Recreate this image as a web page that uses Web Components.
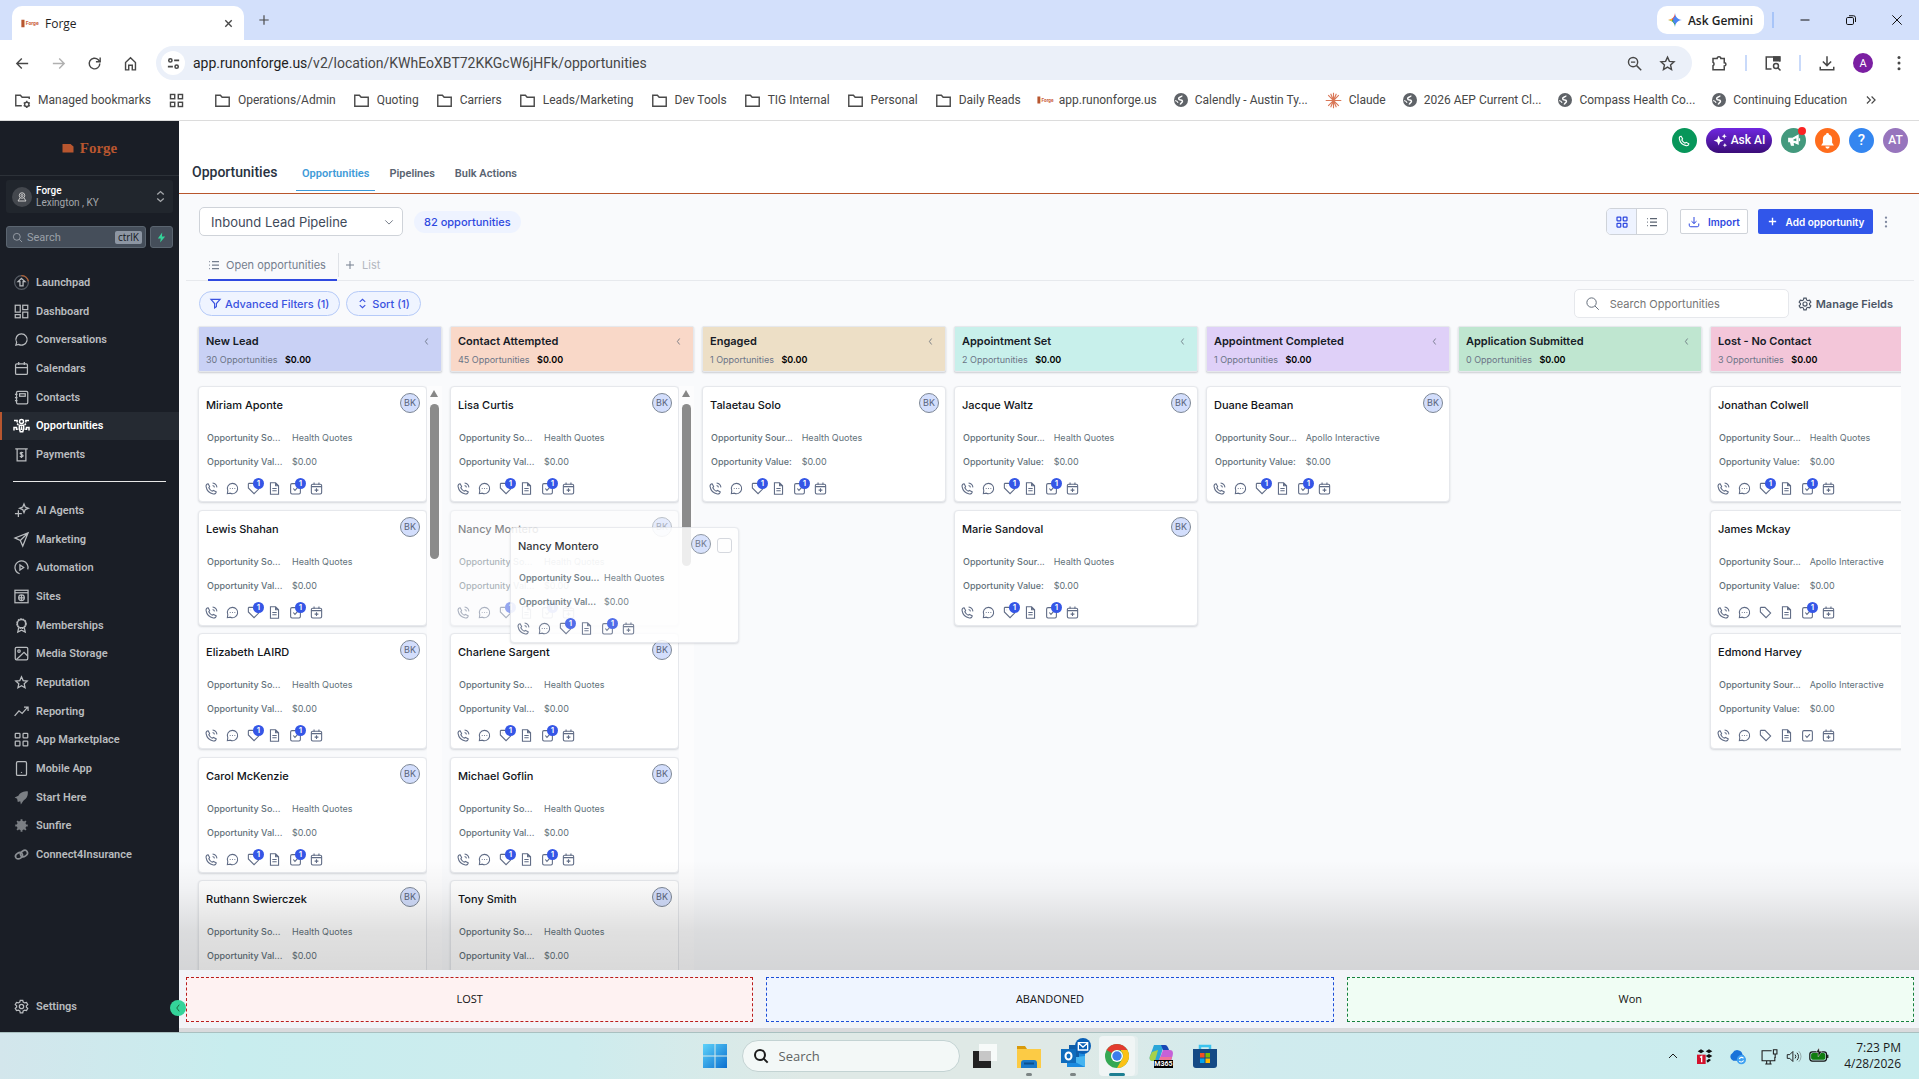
<!DOCTYPE html>
<html lang="en">
<head>
<meta charset="utf-8">
<title>Forge</title>
<style>
    html, body {
        height: 100%;
        margin: 0;
    }

    body {
        display: flex;
        flex-direction: column;
        overflow: hidden;
        font-family: Inter, "Liberation Sans", sans-serif;
        background: #fff;
    }

    .app {
        display: flex;
        flex: 1;
        min-height: 0;
    }

    .page {
        display: flex;
        flex-direction: column;
        flex: 1;
        min-width: 0;
        background: #f9fafc;
    }
</style>
</head>
<body>
<browser-bar></browser-bar>
<div class="app">
    <side-bar></side-bar>
    <div class="page">
        <page-header></page-header>
        <board-toolbar></board-toolbar>
        <pipeline-board></pipeline-board>
        <drop-bar></drop-bar>
    </div>
</div>
<task-bar></task-bar>

<script>
const ICONS = {
    back: '<path d="M20 12H5M11 5l-7 7 7 7"/>',
    forward: '<path d="M4 12h15M13 5l7 7-7 7"/>',
    reload: '<path d="M19.5 12a7.5 7.5 0 1 1-2.2-5.3L20 9.400"/><path d="M20 3.500V9.500h-6"/>',
    home: '<path d="M5 10.500V21h4.500v-6.500h5V21H19V10.500L12 4z"/>',
    tune: '<circle cx="7" cy="7" r="2.600"/><path d="M13 7h8M3 17h8"/><circle cx="17" cy="17" r="2.600"/>',
    zoomout: '<circle cx="10" cy="10" r="6.500"/><path d="M15 15l6.500 6.500M7 10h6"/>',
    star: '<path d="M12 3l2.700 6 6.500.7-4.900 4.300 1.400 6.500L12 17.200l-5.700 3.300L7.700 14 2.800 9.700 9.300 9z"/>',
    puzzle: '<path d="M4 6h5.500a2.500 2.500 0 0 1 5 0H19v5.500a2 2 0 0 1 0 4.500V21H4v-5.500a2.500 2.500 0 0 0 0-4.500z"/>',
    tabsearch: '<path d="M10 20H3V4h18v6"/><path d="M13 4h8v5h-8z" fill="currentColor"/><circle cx="16" cy="16" r="3.300"/><path d="M18.500 18.500L22 22"/>',
    download: '<path d="M12 3v12M6.500 10l5.500 5.500L17.500 10M3 17v4h18v-4"/>',
    dots: '<g fill="currentColor" stroke="none"><circle cx="12" cy="4.500" r="2"/><circle cx="12" cy="12" r="2"/><circle cx="12" cy="19.500" r="2"/></g>',
    close: '<path d="M5 5l14 14M19 5L5 19"/>',
    plus: '<path d="M12 4v16M4 12h16"/>',
    minus: '<path d="M3 12h18"/>',
    restore: '<rect x="3" y="7" width="14" height="14" rx="2.500"/><path d="M8 3.500h9a4 4 0 0 1 4 4V16"/>',
    folder: '<path d="M2.500 4.500h6.500l2.500 3h10v12.500h-19z"/>',
    managed: '<path d="M11 19.500H2.500v-15H9l2.500 3h10V10"/><circle cx="18" cy="17.500" r="3"/><path d="M18 12.500v2M18 20.500v2M13.700 15l1.700 1M20.600 19l1.700 1M13.700 20l1.700-1M20.600 16l1.700-1"/>',
    apps: '<rect x="3.500" y="3.500" width="6" height="6"/><rect x="14.500" y="3.500" width="6" height="6"/><rect x="3.500" y="14.500" width="6" height="6"/><rect x="14.500" y="14.500" width="6" height="6"/>',
    globe: '<circle cx="12" cy="12" r="12" fill="#5f6368" stroke="none"/><path d="M14 4.500c-1 3-7 2-6 5.500s6 1 6.500 4-4 3-3.500 6" stroke="#fff" stroke-width="2.600"/><path d="M2 13c2 .500 4 1 5 4" stroke="#fff" stroke-width="1.800"/>',
    claude: '<path d="M12 1v22M1 12h22M4.500 4.500l15 15M19.500 4.500l-15 15M8 2.500l8 19M16 2.500l-8 19" stroke="#d97757" stroke-width="1.600"/>',
    more: '<path d="M5 6l6 6-6 6M13 6l6 6-6 6"/>',
    chevdown: '<path d="M3 8l9 9 9-9"/>',
    chevup: '<path d="M4 16l8-8 8 8"/>',
    chevleft: '<path d="M15 4l-6 8 6 8"/>',
    updown: '<path d="M6 8.500L12 3l6 5.500M6 15.500l6 5.500 6-5.500"/>',
    search: '<circle cx="10.500" cy="10.500" r="7.500"/><path d="M16 16l6 6"/>',
    bolt: '<path d="M13.500 1L4 14h6.500L9 23l11-13h-7z" fill="#34d399" stroke="none"/>',
    account: '<circle cx="12" cy="9" r="5.500"/><circle cx="12" cy="9" r="2"/><path d="M8 14l-4 6h16l-4-6"/>',
    launch: '<circle cx="12" cy="12" r="11" stroke="#555b63"/><path d="M12 1a11 11 0 0 1 11 9" stroke="#b8602f"/><path d="M12 5.500l5.500 5h-3v7h-5v-7h-3z"/>',
    dashboard: '<rect x="2" y="2" width="8" height="11"/><rect x="14" y="2" width="8" height="7"/><rect x="2" y="17" width="8" height="5"/><rect x="14" y="13" width="8" height="9"/>',
    chat: '<path d="M12 3a9 9 0 1 1-4.500 16.800L3 21l1.200-4.500A9 9 0 0 1 12 3z"/>',
    calendar: '<rect x="2.500" y="4.500" width="19" height="17" rx="2"/><path d="M2.500 10.500h19M7.500 1.500v5M16.500 1.500v5"/>',
    contacts: '<rect x="4" y="2" width="18" height="20" rx="2"/><rect x="9" y="6" width="9" height="4"/><path d="M1.500 7h4M1.500 12h4M1.500 17h4"/>',
    people: '<g stroke-width="2.400"><circle cx="12" cy="5.500" r="3.200"/><path d="M8.500 11.500h7v5l-1.500 5.500h-4l-1.500-5.500zM12 13v6"/><path d="M0 4h5v3M24 4h-5v3M0 20v-5h4v4M24 20v-5h-4v4M5 9l2 2M19 9l-2 2M5.500 18H7M17 18h1.500"/></g>',
    payments: '<path d="M2 3h20M5 3v19h14V3"/><path d="M14.500 9.500c-1-1.500-5-1-4.500 1s4.500 1.500 4.500 3.500-4 2-5 .5M12 7.500v10"/>',
    agents: '<path d="M16 1.500l2 5 5 2-5 2-2 5-2-5-5-2 5-2zM7 11.500v11M1.500 17h11"/>',
    send: '<path d="M22.500 1.500L1.500 9.500l8.500 4 4 9zM10 13.500L22 2"/>',
    automation: '<path d="M9 22A10.500 10.500 0 1 1 22 15"/><path d="M9.500 8v8l6-4z"/>',
    sites: '<rect x="1.500" y="2" width="21" height="20"/><path d="M1.500 6h21"/><circle cx="12" cy="14" r="4.500"/><path d="M12 9.500v9M7.500 14h9"/>',
    badge: '<circle cx="12" cy="9" r="7.500" stroke-dasharray="3 1"/><circle cx="12" cy="9" r="6.500"/><path d="M7.500 15.500L6 22.500l6-3 6 3-1.500-7"/>',
    image: '<rect x="2" y="2" width="20" height="20" rx="2"/><circle cx="8" cy="8" r="2"/><path d="M4 21.500L16 10l6 6"/>',
    trend: '<path d="M1 19l7-8 5 4 9-10M16 5h6.500v6"/>',
    grid: '<rect x="2" y="2" width="7.500" height="7.500" rx="1"/><rect x="14.500" y="2" width="7.500" height="7.500" rx="1"/><rect x="2" y="14.500" width="7.500" height="7.500" rx="1"/><rect x="14.500" y="14.500" width="7.500" height="7.500" rx="1"/>',
    mobile: '<rect x="4" y="1" width="16" height="22" rx="2"/><path d="M12 17.500v1.500"/>',
    rocket: '<path d="M22 2C14 1 9 5 7 9L1 12l4 2 1 5 4-1 1 5 4-6c5-3 8-8 7-15z" fill="#7b7f84" stroke="none"/>',
    sun: '<g stroke="#7b7f84" stroke-width="3"><circle cx="12" cy="12" r="6" fill="#7b7f84"/><path d="M12 2v20M2 12h20M5 5l14 14M19 5L5 19"/></g>',
    link: '<g stroke="#8b8f94" stroke-width="2.600"><ellipse cx="8" cy="14" rx="6" ry="4.500" transform="rotate(-35 8 14)"/><ellipse cx="16" cy="10.500" rx="6" ry="4.500" transform="rotate(-35 16 10.500)"/></g>',
    gear: '<circle cx="12" cy="12" r="3.500"/><path d="M10 2h4l.7 3 2.300 1.300L20 5.500l2 3.500-2.200 2v2l2.200 2-2 3.500-3-.8-2.300 1.300-.7 3h-4l-.7-3L7 17.700l-3 .8L2 15l2.200-2v-2L2 9l2-3.500 3 .8L9.300 5z"/>',
    list: '<path d="M8 5h14M8 12h14M8 19h14M2.500 5h1.500M2.500 12h1.500M2.500 19h1.500"/>',
    import: '<path d="M12 2v13M7 10.500l5 4.500 5-4.500M2.500 15v3.500a3 3 0 0 0 3 3h13a3 3 0 0 0 3-3V15"/>',
    filter: '<path d="M2 3h20l-8 9v7l-4 2.500V12z"/>',
    phone: '<path d="M8.500 8.500L5.800 3.300C3.500 3.500 1.500 5.500 2 8.500c1.200 7 6.500 12.300 13.500 13.500 3 .5 5-1.500 5.200-3.800l-5.200-2.700-2 1.500c-3-1.200-5-3.500-6.500-6.500z"/><path d="M14 6.500c2 .3 3.200 1.500 3.500 3.500M14 2c4.500.5 7.500 3.500 8 8"/>',
    handset: '<path d="M8.500 9L5.800 4C3.500 4 2 6 2.500 9c1.200 6.500 6 11.300 12.500 12.500 3 .5 5-1 5-3.300L15 15.500l-2 1.500c-2.500-1.200-4.500-3-6-6z"/>',
    sms: '<path d="M12 2.500a9.500 9.500 0 1 1-4 18.100l-5.500 1 .8-5.500A9.500 9.500 0 0 1 12 2.500z"/><path d="M7 12h1.500M11.300 12h1.500M15.600 12h1.500"/>',
    tag: '<path d="M2.500 3.500V11L13 21.500 21.500 13 11 2.500H3.500z"/><path d="M7 7.500h.5"/>',
    doc: '<path d="M14 1.500H4.500v21h15V7zM14 1.500V7h5.500M8 12h8M8 16h8"/>',
    check: '<rect x="3" y="3" width="18" height="19" rx="2.500"/><path d="M8 12l3 3.500 5.500-6"/>',
    calplus: '<rect x="2.500" y="4" width="19" height="18" rx="2.500"/><path d="M2.500 8.500h19M7.500 1v4M16.500 1v4M12 11.500v7M8.500 15h7"/>',
    sparkle: '<g fill="currentColor" stroke="none"><path d="M9 4l2.300 6L17 12l-5.700 2.300L9 20l-2.300-5.700L1 12l5.700-2z"/><path d="M18 1l1.200 3L22 5l-2.800 1.200L18 9l-1.200-2.800L14 5l2.800-1zM19 16l1 2.500 2.500 1-2.500 1L19 23l-1-2.500-2.500-1 2.500-1z"/></g>',
    horn: '<path d="M3 9h7l9-5v15l-9-4H3zM6 15l1.500 6H11l-1-6" fill="currentColor"/><path d="M21.500 9v5"/><path d="M11 11l5-2v5l-5-1z" fill="#43997d" stroke="none"/>',
    bell: '<path d="M12 1.500a2 2 0 0 0-2 2C7 4.500 5.500 7 5.500 10v5L3 19h18l-2.500-4v-5c0-3-1.500-5.500-4.500-6.500a2 2 0 0 0-2-2zM9 20.500a3 3 0 0 0 6 0z" fill="currentColor" stroke="none"/>',
    gemini: '<path d="M12 0c1 7 4 11 12 12-8 1-11 5-12 12z" fill="#4b84f3" stroke="none"/><path d="M12 0v12H0c8-1 11-5 12-12z" fill="#e8514a" stroke="none"/><path d="M0 12h12v12C11 17 8 13 0 12z" fill="#35a265" stroke="none"/><path d="M0 12c3-.5 5-1 7-2.500v5C5 13 3 12.500 0 12z" fill="#f5c02d" stroke="none"/><path d="M9 9l3-3 6 6-6 6-3-2z" fill="#4b84f3" stroke="none"/>',
    forge: '<rect x="-1" y="6" width="5" height="12" fill="#b8562f" stroke="none"/><text x="6" y="15" font-size="8" font-weight="700" font-family="Roboto, sans-serif" fill="#c9603b" stroke="none">Forge</text>',
    anvil: '<path d="M1 4h16l6 5v12H1z" fill="#b8562f" stroke="none"/>',
    windows: '<defs><linearGradient id="w" x1="0" y1="0" x2="1" y2="1"><stop offset="0" stop-color="#5fd3fa"/><stop offset="1" stop-color="#0a6fd0"/></linearGradient></defs><path d="M0 0h11.500v11.500H0zM12.500 0H24v11.500H12.500zM0 12.500h11.500V24H0zM12.500 12.500H24V24H12.500z" fill="url(#w)" stroke="none"/>',
    taskview: '<rect x="0" y="7" width="18" height="17" fill="#222" stroke="none"/><rect x="6" y="0" width="18" height="17" fill="#fff" fill-opacity=".75" stroke="none"/>',
    explorer: '<path d="M0 2h8l2 3h14v19H0z" fill="#d99a0b" stroke="none"/><rect y="5" width="24" height="19" fill="#fccb45" stroke="none"/><path d="M4 24v-5a3 3 0 0 1 3-3h10a3 3 0 0 1 3 3v5z" fill="#1b78c8" stroke="none"/><path d="M7 19.500h10" stroke="#0b4f8f"/>',
    outlook: '<path d="M6 6h18v17H6z" fill="#1a8ae0" stroke="none"/><path d="M6 14l18 9V12z" fill="#46b4f0" stroke="none"/><path d="M8 1h10v12H8z" fill="#0f5da8" stroke="none"/><rect y="5" width="15" height="14" fill="#0f6cbd" stroke="none"/><ellipse cx="7.500" cy="12" rx="3" ry="3.500" stroke="#fff" stroke-width="2"/>',
    mail: '<circle cx="12" cy="12" r="12" fill="#0a5fb5" stroke="none"/><path d="M5 7h14v11H5zM5 7.500l7 6 7-6" stroke="#fff"/>',
    chrome: '<circle cx="12" cy="12" r="12" fill="#34a853" stroke="none"/><path d="M12 0a12 12 0 0 1 10.400 6H12a6 6 0 0 0-5.200 3L1.600 6A12 12 0 0 1 12 0z" fill="#e33b2e" stroke="none"/><path d="M22.400 6A12 12 0 0 1 12 24l5.200-9A6 6 0 0 0 16 7V6z" fill="#fbc116" stroke="none"/><circle cx="12" cy="12" r="6" fill="#fff" stroke="none"/><circle cx="12" cy="12" r="4.700" fill="#3b7ded" stroke="none"/>',
    copilot: '<path d="M5 1h10l-5 16H4c-3 0-4-2-3-5z" fill="#2ba6d8" stroke="none"/><path d="M3 8l6-2-3 11H4c-3 0-4-2-3-5z" fill="#a6d24b" stroke="none"/><path d="M12 1h4c2 0 3 2 4 5h-6z" fill="#1746b5" stroke="none"/><path d="M14 6h7c3 0 3.500 3 2.500 6l-2 7H9z" fill="#c561d8" stroke="none"/><path d="M11 13h12l-2 6H9z" fill="#f0729a" stroke="none"/>',
    store: '<path d="M7 6V2h10v4" stroke="#3cc3ee" stroke-width="2.500"/><path d="M0 5h24v16a3 3 0 0 1-3 3H3a3 3 0 0 1-3-3z" fill="#154a85" stroke="none"/><path d="M7 9h4.500v4.500H7z" fill="#f25022" stroke="none"/><path d="M12.500 9H17v4.500h-4.500z" fill="#7fba00" stroke="none"/><path d="M7 14.500h4.500V19H7z" fill="#00a4ef" stroke="none"/><path d="M12.500 14.500H17V19h-4.500z" fill="#ffb900" stroke="none"/>',
    dropbox: '<g fill="#111" stroke="none"><path d="M1 5l5-3 5 3-5 3zM13 5l5-3 5 3-5 3zM13 12l5-3 5 3-5 3zM14 19l4-3 3 2-5 4z"/></g><rect x="0" y="10" width="13" height="14" fill="#d3122c" stroke="none"/><path d="M4.500 14l2.500-1.500v9" stroke="#fff" stroke-width="2"/>',
    cloud: '<path d="M6 18a6 6 0 0 1-1-11 7.500 7.500 0 0 1 14 2 5 5 0 0 1 0 9z" fill="#1a73d9" stroke="none"/><circle cx="17.500" cy="16.500" r="6.500" fill="#3fa2f2" stroke="none"/><path d="M14.500 15.500a3.500 3.500 0 0 1 6-1M20.500 17.500a3.500 3.500 0 0 1-6 1" stroke="#fff" stroke-width="1.500"/>',
    network: '<path d="M15 4H1.500v14h18v-5M8 18v4M13 18v4M6 22.500h9"/><path d="M17.500 2.500h5v6h-5zM20 8.500V14"/>',
    volume: '<path d="M2 9v6h4l5 5V4L6 9zM14.500 9a4.500 4.500 0 0 1 0 6M17.500 6a8.500 8.500 0 0 1 0 12"/><path d="M20.500 3.500a12 12 0 0 1 0 17" stroke-opacity=".35"/>',
    battery: '<rect x="1" y="7" width="20" height="11" rx="3" stroke="#111"/><rect x="2.500" y="8.500" width="17" height="8" rx="2" fill="#107c10" stroke="none"/><path d="M22.500 10.500v4" stroke="#111"/><path d="M12 2l-3.500 5.500h2.500V13l4.500-6.500h-3z" fill="#111" stroke="#fff" stroke-width=".5"/>'
};

class UiIcon extends HTMLElement {
    connectedCallback() {
        const size = this.getAttribute("size") || 16;
        const weight = this.getAttribute("weight") || 2;
        this.attachShadow({mode: 'open'}).innerHTML = `
        <style>
            :host { display: inline-flex; flex: none; }
            svg { display: block; overflow: visible; }
        </style>
        <svg width="${size}" height="${size}" viewBox="0 0 24 24" fill="none" stroke="currentColor" stroke-width="${weight}" aria-hidden="true">${ICONS[this.getAttribute("name")]}</svg>
        `;
    }
}
customElements.define('ui-icon', UiIcon);


class BookmarkLink extends HTMLElement {
    connectedCallback() {
        const icon = this.getAttribute("icon");
        const size = {forge: 14, globe: 14}[icon] || 17;
        this.attachShadow({mode: 'open'}).innerHTML = `
        <style>
            :host { display: block; flex: none; }
            a {
                display: flex;
                align-items: center;
                gap: 7px;
                color: #474747;
                text-decoration: none;
                white-space: nowrap;
            }
            ui-icon { color: #4a4a4a; }
        </style>
        <a href="#"><ui-icon name="${icon}" size="${size}"></ui-icon><slot></slot></a>
        `;
    }
}
customElements.define('bookmark-link', BookmarkLink);


class BrowserBar extends HTMLElement {
    connectedCallback() {
        const bookmarks = [
            ["folder", "Operations/Admin"], ["folder", "Quoting"], ["folder", "Carriers"],
            ["folder", "Leads/Marketing"], ["folder", "Dev Tools"], ["folder", "TIG Internal"],
            ["folder", "Personal"], ["folder", "Daily Reads"], ["forge", "app.runonforge.us"],
            ["globe", "Calendly - Austin Ty..."], ["claude", "Claude"], ["globe", "2026 AEP Current Cl..."],
            ["globe", "Compass Health Co..."], ["globe", "Continuing Education"]
        ];
        this.attachShadow({mode: 'open'}).innerHTML = `
        <style>
            :host {
                display: block;
                font-family: Roboto, "Open Sans", sans-serif;
                font-size: 12px;
                color: #1f1f1f;
                background: #fff;
                border-bottom: 1px solid #dcdcdc;
            }
            button {
                display: flex;
                align-items: center;
                justify-content: center;
                border: 0;
                padding: 0;
                background: none;
                color: #474747;
                font: inherit;
            }
            .strip {
                display: flex;
                align-items: center;
                height: 40px;
                padding: 0 11px 0 12px;
                background: #d3e0fb;
                font-family: "Open Sans", sans-serif;
            }
            .tab {
                display: flex;
                align-items: center;
                align-self: flex-end;
                gap: 8px;
                box-sizing: border-box;
                width: 232px;
                height: 34px;
                padding: 0 10px;
                border-radius: 10px 10px 0 0;
                background: #fff;
            }
            .tab span { flex: 1; }
            .new { width: 40px; }
            .gemini {
                gap: 6px;
                width: 107px;
                height: 28px;
                margin-left: auto;
                border-radius: 10px;
                background: #fff;
                color: #1f1f1f;
                font-weight: 600;
            }
            .rule { width: 2px; height: 16px; background: #c9dafa; }
            .strip .rule { margin: 0 8px; background: #a8c5f8; }
            .win { width: 46px; color: #111; }
            .win:last-child { width: 22px; margin-left: 12px; }
            .bar {
                display: flex;
                align-items: center;
                gap: 16px;
                height: 40px;
                padding: 0 11px 0 12px;
            }
            .bar > button { width: 20px; height: 20px; }
            .bar .off { color: #b0b0b0; }
            .omni {
                display: flex;
                align-items: center;
                flex: 1;
                gap: 8px;
                height: 34px;
                margin-top: 6px;
                padding: 0 16px 0 5px;
                border-radius: 17px;
                background: #ebf0f9;
                font-size: 14px;
            }
            .omni .site { width: 24px; height: 24px; border-radius: 50%; background: #fff; }
            .omni .star { margin-left: 8px; }
            .url { flex: 1; color: #474747; }
            .url b { color: #1f1f1f; font-weight: 400; }
            .right { display: flex; align-items: center; gap: 17px; margin-left: 2px; margin-top: 6px; }
            .nav { margin-top: 6px; }
            .me { width: 20px; height: 20px; border-radius: 50%; background: #7b1fa2; color: #fff; font-size: 11px; }
            .marks {
                display: flex;
                align-items: center;
                gap: 17px;
                height: 40px;
                padding: 0 28px 0 14px;
            }
            .marks .rule { margin-left: -4px; margin-right: -1px; }
            .marks .over { margin-left: auto; margin-right: 14px; }
        </style>
        <div class="strip">
            <div class="tab">
                <ui-icon name="forge" size="15"></ui-icon>
                <span>Forge</span>
                <button aria-label="Close tab"><ui-icon name="close" size="11" weight="3"></ui-icon></button>
            </div>
            <button class="new" aria-label="New tab"><ui-icon name="plus" size="14"></ui-icon></button>
            <button class="gemini"><ui-icon name="gemini" size="14"></ui-icon>Ask Gemini</button>
            <div class="rule"></div>
            <button class="win" aria-label="Minimize"><ui-icon name="minus" size="12"></ui-icon></button>
            <button class="win" aria-label="Restore"><ui-icon name="restore" size="12"></ui-icon></button>
            <button class="win" aria-label="Close"><ui-icon name="close" size="16" weight="1.500"></ui-icon></button>
        </div>
        <div class="bar">
            <button class="nav" aria-label="Back"><ui-icon name="back" size="17"></ui-icon></button>
            <button class="nav off" aria-label="Forward"><ui-icon name="forward" size="17"></ui-icon></button>
            <button class="nav" aria-label="Reload"><ui-icon name="reload" size="17"></ui-icon></button>
            <button class="nav" aria-label="Home"><ui-icon name="home" size="17"></ui-icon></button>
            <div class="omni">
                <button class="site" aria-label="Site information"><ui-icon name="tune" size="15" weight="2.500"></ui-icon></button>
                <span class="url"><b>app.runonforge.us</b>/v2/location/KWhEoXBT72KKGcW6jHFk/opportunities</span>
                <button aria-label="Zoom"><ui-icon name="zoomout" size="17"></ui-icon></button>
                <button class="star" aria-label="Bookmark"><ui-icon name="star" size="17"></ui-icon></button>
            </div>
            <div class="right">
                <button aria-label="Extensions"><ui-icon name="puzzle" size="18"></ui-icon></button>
                <div class="rule"></div>
                <button aria-label="Search tabs"><ui-icon name="tabsearch" size="18"></ui-icon></button>
                <div class="rule"></div>
                <button aria-label="Downloads"><ui-icon name="download" size="18"></ui-icon></button>
                <button class="me">A</button>
                <button aria-label="Menu"><ui-icon name="dots" size="18"></ui-icon></button>
            </div>
        </div>
        <div class="marks">
            <bookmark-link icon="managed">Managed bookmarks</bookmark-link>
            <button aria-label="Apps"><ui-icon name="apps" size="17"></ui-icon></button>
            <div class="rule"></div>
            ${bookmarks.map(([icon, text]) => `<bookmark-link icon="${icon}">${text}</bookmark-link>`).join("")}
            <button class="over" aria-label="More bookmarks"><ui-icon name="more" size="14"></ui-icon></button>
        </div>
        `;
    }
}
customElements.define('browser-bar', BrowserBar);


class NavItem extends HTMLElement {
    connectedCallback() {
        this.attachShadow({mode: 'open'}).innerHTML = `
        <style>
            :host { display: flex; }
            a {
                display: flex;
                align-items: center;
                gap: 7px;
                flex: 1;
                padding-left: 12px;
                border-left: 2px solid transparent;
                color: #b9bcbf;
                font: 600 11px Roboto, sans-serif;
                text-decoration: none;
            }
            :host([active]) a { border-color: #b8562f; background: #252a32; color: #fff; }
        </style>
        <a href="#"><ui-icon name="${this.getAttribute("icon")}" size="15"></ui-icon><slot></slot></a>
        `;
    }
}
customElements.define('nav-item', NavItem);


class SideBar extends HTMLElement {
    items(list) {
        return list.map(([icon, text]) =>
            `<nav-item icon="${icon}" ${text === "Opportunities" ? "active" : ""}>${text}</nav-item>`).join("");
    }

    connectedCallback() {
        this.attachShadow({mode: 'open'}).innerHTML = `
        <style>
            :host {
                position: relative;
                z-index: 2;
                display: flex;
                flex-direction: column;
                flex: none;
                width: 179px;
                background: #1a1e26;
                font-family: Roboto, sans-serif;
                color: #b9bcbf;
            }
            .logo {
                display: flex;
                align-items: center;
                justify-content: center;
                gap: 6px;
                height: 54px;
                border-bottom: 1px solid #2c3138;
                color: #b8562f;
                font: 700 15px "Liberation Serif", serif;
            }
            .place {
                display: flex;
                align-items: center;
                gap: 4px;
                height: 33px;
                margin: 4px 6px 0;
                padding: 0 6px;
                border: 0;
                border-radius: 3px;
                background: #21262d;
                color: #a4a7ab;
                font: 10px/12px Roboto, sans-serif;
                text-align: left;
            }
            .place b { display: block; color: #fff; font-weight: 500; }
            .place span { flex: 1; }
            .round {
                display: flex;
                align-items: center;
                justify-content: center;
                width: 20px;
                height: 20px;
                border-radius: 50%;
                background: #44484e;
                color: #ccc;
            }
            .find { display: flex; gap: 4px; margin: 13px 6px 0; }
            label, .fast {
                display: flex;
                align-items: center;
                box-sizing: border-box;
                height: 22px;
                border: 1px solid #5b6570;
                border-radius: 3px;
                background: #454e5a;
            }
            label { flex: 1; gap: 4px; padding: 0 3px 0 5px; color: #9aa0a8; }
            input {
                flex: 1;
                width: 20px;
                padding: 0;
                border: 0;
                background: none;
                font: 11px Roboto, sans-serif;
            }
            input::placeholder { color: #9aa0a8; }
            kbd {
                padding: 0 3px;
                border-radius: 2px;
                background: #8d96a3;
                color: #14181e;
                font: 10px/13px "Open Sans", sans-serif;
            }
            .fast { justify-content: center; width: 23px; padding: 0; }
            nav { display: grid; grid-auto-rows: 1fr; }
            .first { height: 201px; margin-top: 20px; }
            .second { height: 373px; margin-top: 14px; }
            hr { width: 153px; height: 1px; margin: 12px 13px 0; border: 0; background: #e8e8e8; }
            .settings { height: 29px; margin: auto 0 11px; }
            .fold {
                position: absolute;
                right: -7px;
                bottom: 16px;
                display: flex;
                align-items: center;
                justify-content: center;
                width: 16px;
                height: 16px;
                padding: 0;
                border: 0;
                border-radius: 50%;
                background: #34d399;
                color: #14532d;
            }
        </style>
        <div class="logo"><ui-icon name="anvil" size="12"></ui-icon>Forge</div>
        <button class="place">
            <i class="round"><ui-icon name="account" size="12"></ui-icon></i>
            <span><b>Forge</b>Lexington , KY</span>
            <ui-icon name="updown" size="13" weight="2.500"></ui-icon>
        </button>
        <div class="find">
            <label><ui-icon name="search" size="11"></ui-icon><input type="text" placeholder="Search" aria-label="Search"><kbd>ctrlK</kbd></label>
            <button class="fast" aria-label="Quick actions"><ui-icon name="bolt" size="11"></ui-icon></button>
        </div>
        <nav class="first">
            ${this.items([["launch", "Launchpad"], ["dashboard", "Dashboard"], ["chat", "Conversations"],
                ["calendar", "Calendars"], ["contacts", "Contacts"], ["people", "Opportunities"], ["payments", "Payments"]])}
        </nav>
        <hr>
        <nav class="second">
            ${this.items([["agents", "AI Agents"], ["send", "Marketing"], ["automation", "Automation"], ["sites", "Sites"],
                ["badge", "Memberships"], ["image", "Media Storage"], ["star", "Reputation"], ["trend", "Reporting"],
                ["grid", "App Marketplace"], ["mobile", "Mobile App"], ["rocket", "Start Here"], ["sun", "Sunfire"],
                ["link", "Connect4Insurance"]])}
        </nav>
        <nav-item class="settings" icon="gear">Settings</nav-item>
        <button class="fold" aria-label="Collapse"><ui-icon name="chevleft" size="10"></ui-icon></button>
        `;
    }
}
customElements.define('side-bar', SideBar);


class PageHeader extends HTMLElement {
    connectedCallback() {
        this.attachShadow({mode: 'open'}).innerHTML = `
        <style>
            :host {
                display: block;
                height: 72px;
                border-bottom: 1px solid #b8562c;
                background: #fff;
                font-family: Roboto, sans-serif;
            }
            .top {
                display: flex;
                align-items: center;
                justify-content: flex-end;
                gap: 9px;
                height: 38px;
                padding-right: 11px;
            }
            button {
                position: relative;
                display: flex;
                align-items: center;
                justify-content: center;
                width: 25px;
                height: 25px;
                padding: 0;
                border: 0;
                border-radius: 13px;
                color: #fff;
                font: 500 12px Roboto, sans-serif;
            }
            .phone { background: #07965a; }
            .ai { gap: 3px; width: 66px; background: linear-gradient(#7027e0, #3a0d78); }
            .horn { background: #43997d; }
            .horn i { position: absolute; right: 0; top: -1px; width: 8px; height: 8px; border-radius: 50%; background: #fb2323; }
            .bell { background: #ff6d1d; }
            .help { background: #3486f0; font-size: 15px; }
            .user { background: #9775bd; }
            .row { display: flex; height: 33px; padding-left: 13px; }
            h1 {
                margin: 0;
                width: 104px;
                color: #29323f;
                font: 500 14px/26px Roboto, sans-serif;
            }
            a {
                height: 31px;
                padding: 0 6px;
                margin-right: 8px;
                color: #5a6472;
                font: 600 11px/29px Roboto, sans-serif;
                text-decoration: none;
            }
            a.on { border-bottom: 1px solid #3f9bd8; color: #3f9bd8; }
        </style>
        <div class="top">
            <button class="phone" aria-label="Call"><ui-icon name="handset" size="13"></ui-icon></button>
            <button class="ai"><ui-icon name="sparkle" size="15"></ui-icon>Ask AI</button>
            <button class="horn" aria-label="News"><ui-icon name="horn" size="14"></ui-icon><i></i></button>
            <button class="bell" aria-label="Notifications"><ui-icon name="bell" size="17"></ui-icon></button>
            <button class="help">?</button>
            <button class="user">AT</button>
        </div>
        <div class="row">
            <h1>Opportunities</h1>
            <a class="on" href="#">Opportunities</a>
            <a href="#">Pipelines</a>
            <a href="#">Bulk Actions</a>
        </div>
        `;
    }
}
customElements.define('page-header', PageHeader);


class BoardToolbar extends HTMLElement {
    connectedCallback() {
        this.attachShadow({mode: 'open'}).innerHTML = `
        <style>
            :host { display: block; font-size: 11px; color: #5b6472; }
            button {
                display: flex;
                align-items: center;
                justify-content: center;
                box-sizing: border-box;
                padding: 0;
                border: 0;
                background: none;
                color: inherit;
                font: inherit;
            }
            .line { display: flex; align-items: center; padding: 0 18px 0 20px; }
            .one { height: 29px; padding-top: 13px; }
            .pick { display: grid; align-items: center; width: 204px; }
            .pick > * { grid-area: 1 / 1; }
            .pick ui-icon { justify-self: end; margin-right: 9px; pointer-events: none; }
            select {
                appearance: none;
                box-sizing: border-box;
                height: 29px;
                padding: 0 11px;
                border: 1px solid #cfd3d9;
                border-radius: 5px;
                background: #fff;
                color: #3f4a5a;
                font: 13px Inter, sans-serif;
            }
            .count {
                margin-left: 11px;
                padding: 0 10px;
                border-radius: 11px;
                background: #eef3ff;
                color: #2f49e0;
                font-weight: 500;
                line-height: 22px;
            }
            .views { display: flex; margin-left: auto; border: 1px solid #cfd3d9; border-radius: 5px; background: #fff; overflow: hidden; }
            .views button { width: 30px; height: 25px; }
            .views button:first-child { border-right: 1px solid #cfd3d9; background: #eef3ff; color: #2f49e0; }
            .import, .add { gap: 8px; height: 25px; border-radius: 2px; font-size: 10px; font-weight: 600; }
            .import { width: 68px; margin-left: 12px; border: 1px solid #cfd3d9; background: #fff; color: #2f49e0; }
            .add { width: 115px; margin-left: 10px; background: #3156ea; color: #fff; }
            .menu { margin-left: 6px; margin-right: 8px; color: #8089a0; }
            .tabs {
                display: flex;
                height: 29px;
                margin: 15px 5px 0 7px;
                padding-left: 22px;
                border-bottom: 1px solid #e7e9ed;
            }
            .tabs button { gap: 6px; color: #757e8e; }
            .tabs .on {
                justify-content: flex-start;
                width: 129px;
                height: 30px;
                border-bottom: 2px solid #2f49e0;
            }
            .tabs .list { margin: 2px 0 3px 1px; padding-left: 5px; border-left: 1px solid #dfe2e7; color: #b4b8c0; }
            .tabs .list ui-icon { color: #757e8e; }
            .two { height: 29px; margin-top: 8px; }
            .chip {
                gap: 4px;
                height: 25px;
                margin-right: 6px;
                padding: 0 10px;
                border: 1px solid #b5caf8;
                border-radius: 13px;
                background: #eff4ff;
                color: #3a52e0;
                font-weight: 500;
            }
            label {
                display: flex;
                align-items: center;
                gap: 10px;
                box-sizing: border-box;
                width: 215px;
                height: 29px;
                margin-left: auto;
                padding: 0 10px;
                border: 1px solid #e6e8ec;
                border-radius: 5px;
                background: #fff;
            }
            input { flex: 1; min-width: 0; padding: 0; border: 0; font: 11px Inter, sans-serif; }
            input::placeholder { color: #757575; }
            .manage { gap: 4px; margin-left: 9px; margin-right: 8px; color: #4b5565; font-weight: 600; }
        </style>
        <div class="line one">
            <div class="pick">
                <select aria-label="Pipeline"><option>Inbound Lead Pipeline</option></select>
                <ui-icon name="chevdown" size="10"></ui-icon>
            </div>
            <span class="count">82 opportunities</span>
            <div class="views">
                <button aria-label="Board view"><ui-icon name="grid" size="12" weight="2.500"></ui-icon></button>
                <button aria-label="List view"><ui-icon name="list" size="12" weight="2.500"></ui-icon></button>
            </div>
            <button class="import"><ui-icon name="import" size="12"></ui-icon>Import</button>
            <button class="add"><ui-icon name="plus" size="11" weight="3"></ui-icon>Add opportunity</button>
            <button class="menu" aria-label="More"><ui-icon name="dots" size="14"></ui-icon></button>
        </div>
        <div class="tabs">
            <button class="on"><ui-icon name="list" size="12" weight="2.500"></ui-icon>Open opportunities</button>
            <button class="list"><ui-icon name="plus" size="12"></ui-icon>List</button>
        </div>
        <div class="line two">
            <button class="chip"><ui-icon name="filter" size="11" weight="2.500"></ui-icon>Advanced Filters (1)</button>
            <button class="chip"><ui-icon name="updown" size="11" weight="2.500"></ui-icon>Sort (1)</button>
            <label><ui-icon name="search" size="15" weight="1.500"></ui-icon><input type="text" placeholder="Search Opportunities" aria-label="Search Opportunities"></label>
            <button class="manage"><ui-icon name="gear" size="14"></ui-icon>Manage Fields</button>
        </div>
        `;
    }
}
customElements.define('board-toolbar', BoardToolbar);


class OpportunityCard extends HTMLElement {
    count(name) {
        const n = this.getAttribute(name);
        return n ? `<i>${n}</i>` : "";
    }

    // labels are shortened by how much room the card has
    labels() {
        if (this.hasAttribute("drag")) return ["Opportunity Sou...", "Opportunity Val..."];
        if (this.hasAttribute("narrow")) return ["Opportunity So...", "Opportunity Val..."];
        return ["Opportunity Sour...", "Opportunity Value:"];
    }

    connectedCallback() {
        const [source, value] = this.labels();
        this.attachShadow({mode: 'open'}).innerHTML = `
        <style>
            :host {
                display: block;
                box-sizing: border-box;
                height: 116px;
                padding: 6px 6px 0 7px;
                border: 1px solid #e6e8ec;
                border-radius: 4px;
                background: #fff;
                box-shadow: 0 1px 2px #10182826;
                font-size: 9px;
                color: #5f7079;
            }
            :host([faded]) { opacity: .5; }
            header { display: flex; gap: 6px; height: 20px; }
            h3 {
                flex: 1;
                margin: 0;
                color: #101318;
                font-weight: 500;
                font-size: 11px;
                line-height: 24px;
                white-space: nowrap;
            }
            .who {
                box-sizing: border-box;
                width: 20px;
                height: 20px;
                border: 1px solid #7d8795;
                border-radius: 50%;
                background: #d3defc;
                color: #59657a;
                line-height: 18px;
                text-align: center;
            }
            input {
                appearance: none;
                box-sizing: border-box;
                width: 15px;
                height: 15px;
                margin: 4px 0 0;
                border: 1px solid #cfd3d9;
                border-radius: 3px;
                background: #fff;
            }
            dl {
                display: grid;
                grid-template-columns: 38% 1fr;
                grid-auto-rows: 24px;
                column-gap: 4px;
                margin: 13px 0 0;
                padding-left: 1px;
                line-height: 24px;
            }
            :host([drag]) dl { margin-top: 12px; }
            dt { font-weight: 500; white-space: nowrap; }
            :host([drag]) dt { font-weight: 600; }
            dd { margin: 0; white-space: nowrap; }
            .acts { display: flex; gap: 8px; margin-top: 8px; margin-left: -1px; color: #5f6b85; }
            button {
                position: relative;
                display: flex;
                padding: 0;
                border: 0;
                background: none;
                color: inherit;
            }
            button i {
                position: absolute;
                left: 6px;
                top: -4px;
                width: 11px;
                height: 11px;
                border-radius: 50%;
                background: #3556e6;
                color: #fff;
                font: 600 8px/11px Inter, sans-serif;
                text-align: center;
            }
        </style>
        <header>
            <h3>${this.getAttribute("name")}</h3>
            <span class="who">BK</span>
            ${this.hasAttribute("drag") ? '<input type="checkbox" aria-label="Select">' : ""}
        </header>
        <dl>
            <dt>${source}</dt><dd>${this.getAttribute("source")}</dd>
            <dt>${value}</dt><dd>$0.00</dd>
        </dl>
        <div class="acts">
            <button aria-label="Call"><ui-icon name="phone" size="13"></ui-icon></button>
            <button aria-label="Message"><ui-icon name="sms" size="13"></ui-icon></button>
            <button aria-label="Tags"><ui-icon name="tag" size="13"></ui-icon>${this.count("tags")}</button>
            <button aria-label="Notes"><ui-icon name="doc" size="13"></ui-icon></button>
            <button aria-label="Tasks"><ui-icon name="check" size="13"></ui-icon>${this.count("tasks")}</button>
            <button aria-label="Appointments"><ui-icon name="calplus" size="13"></ui-icon></button>
        </div>
        `;
    }
}
customElements.define('opportunity-card', OpportunityCard);


class PipelineColumn extends HTMLElement {
    connectedCallback() {
        const bar = this.hasAttribute("scroll")
            ? `<div class="track"><div class="up"></div><div class="thumb"></div></div>` : "";
        this.attachShadow({mode: 'open'}).innerHTML = `
        <style>
            :host {
                display: flex;
                flex-direction: column;
                flex: none;
                width: 244px;
            }
            header {
                display: grid;
                grid-template-columns: 1fr auto;
                align-content: center;
                box-sizing: border-box;
                height: 46px;
                padding: 2px 10px 0 7px;
                border: 1px solid #e6e8ec;
                border-radius: 2px;
                background: var(--tint);
                box-shadow: 0 1px 2px #10182833;
                font-size: 9px;
                line-height: 18px;
                color: #6b7486;
            }
            h2 { margin: 0; color: #161b26; font-size: 11px; font-weight: 600; line-height: 19px; }
            b { margin-left: 5px; color: #000; font-weight: 600; }
            button { padding: 0; border: 0; background: none; color: #5b6472; }
            .body { display: flex; flex: 1; min-height: 0; margin-top: 14px; }
            .cards { flex: 1; min-width: 0; }
            ::slotted(opportunity-card) { margin-bottom: 7px; }
            ::slotted(opportunity-card:nth-child(odd)) { margin-bottom: 8px; }
            .track { width: 9px; padding: 4px 3px 0; background: #fcfcfd; }
            .up {
                width: 0;
                margin-bottom: 7px;
                border: 4px solid transparent;
                border-top: 0;
                border-bottom: 7px solid #868686;
            }
            .thumb { height: var(--thumb, 155px); border-radius: 5px; background: #8b8b8b; }
        </style>
        <header>
            <h2>${this.getAttribute("name")}</h2>
            <button aria-label="Collapse"><ui-icon name="chevleft" size="9"></ui-icon></button>
            <div>${this.getAttribute("count")} Opportunities <b>$0.00</b></div>
        </header>
        <div class="body"><div class="cards"><slot></slot></div>${bar}</div>
        `;
    }
}
customElements.define('pipeline-column', PipelineColumn);


class PipelineBoard extends HTMLElement {
    card([name, source = "Health Quotes", tags = "1", tasks = "1", extra = ""], narrow) {
        return `<opportunity-card name="${name}" source="${source}" tags="${tags}" tasks="${tasks}" ${narrow} ${extra}></opportunity-card>`;
    }

    connectedCallback() {
        const columns = [
            ["New Lead", 30, "#c9d1f5", "scroll", [["Miriam Aponte"], ["Lewis Shahan"], ["Elizabeth LAIRD"], ["Carol McKenzie"], ["Ruthann Swierczek", "Health Quotes", "", ""]]],
            ["Contact Attempted", 45, "#f9d8c8", "scroll style='--thumb: 162px'", [["Lisa Curtis"], ["Nancy Montero", "Health Quotes", "1", "1", "faded"], ["Charlene Sargent"], ["Michael Goflin"], ["Tony Smith", "Health Quotes", "", ""]]],
            ["Engaged", 1, "#eddfc6", "", [["Talaetau Solo"]]],
            ["Appointment Set", 2, "#c8f0eb", "", [["Jacque Waltz"], ["Marie Sandoval"]]],
            ["Appointment Completed", 1, "#dfd0f8", "", [["Duane Beaman", "Apollo Interactive"]]],
            ["Application Submitted", 0, "#bfe6d0", "", []],
            ["Lost - No Contact", 3, "#f3c6d9", "", [["Jonathan Colwell"], ["James Mckay", "Apollo Interactive", "", "1"], ["Edmond Harvey", "Apollo Interactive", "", ""]]]
        ];
        this.attachShadow({mode: 'open'}).innerHTML = `
        <style>
            :host { position: relative; display: block; flex: 1; min-height: 0; }
            .scroll {
                display: flex;
                gap: 8px;
                height: 100%;
                box-sizing: border-box;
                margin: 0 18px 0 0;
                padding: 8px 0 0 19px;
                overflow: hidden;
            }
            .drag {
                position: absolute;
                left: 331px;
                top: 209px;
                width: 229px;
                opacity: .85;
            }
            .shade {
                position: absolute;
                inset: auto 0 0;
                height: 110px;
                background: linear-gradient(#0000, #00000008 25%, #0000001f 65%, #00000026);
                pointer-events: none;
            }
        </style>
        <div class="scroll">
            ${columns.map(([name, count, tint, attrs, cards]) => `
            <div style="display: flex; --tint: ${tint}"><pipeline-column name="${name}" count="${count}" ${attrs}>${cards.map(c => this.card(c, attrs ? "narrow" : "")).join("")}</pipeline-column></div>`).join("")}
        </div>
        <opportunity-card class="drag" drag name="Nancy Montero" source="Health Quotes" tags="1" tasks="1"></opportunity-card>
        <div class="shade"></div>
        `;
    }
}
customElements.define('pipeline-board', PipelineBoard);


class DropBar extends HTMLElement {
    connectedCallback() {
        this.attachShadow({mode: 'open'}).innerHTML = `
        <style>
            :host {
                display: flex;
                gap: 13px;
                flex: none;
                padding: 7px 5px 6px 7px;
                border-bottom: 4px solid #d9dadc;
                background: #f2f4f8;
                color: #111;
                font: 11px "Open Sans", sans-serif;
            }
            div {
                flex: 1;
                padding-bottom: 2px;
                border: 1px dashed;
                line-height: 41px;
                text-align: center;
            }
            .lost { border-color: #b91c1c; background: #fef2f2; }
            .left { border-color: #1d4ed8; background: #eff5ff; }
            .won { border-color: #15803d; background: #f0fdf4; }
        </style>
        <div class="lost">LOST</div>
        <div class="left">ABANDONED</div>
        <div class="won">Won</div>
        `;
    }
}
customElements.define('drop-bar', DropBar);


class TaskBar extends HTMLElement {
    connectedCallback() {
        this.attachShadow({mode: 'open'}).innerHTML = `
        <style>
            :host {
                display: grid;
                grid-template-columns: 1fr auto 1fr;
                align-items: center;
                box-sizing: border-box;
                height: 47px;
                border-top: 1px solid #a9c0c0;
                background: linear-gradient(90deg, #d3e6ec, #c8edee 12%, #cdecee 30%, #dfe9e6 42%, #dfe9e6 55%, #d0ebee 66%, #c8edee);
                font: 12px "Open Sans", sans-serif;
                color: #1b1b1b;
            }
            button { position: relative; display: flex; padding: 0; border: 0; background: none; color: inherit; }
            .mid { grid-column: 2; display: flex; align-items: center; gap: 20px; }
            .mid > label { margin: 0 -7px 0 -5px; }
            label {
                display: flex;
                align-items: center;
                gap: 10px;
                box-sizing: border-box;
                width: 218px;
                height: 32px;
                padding: 0 10px;
                border: 1px solid #c3d3d3;
                border-radius: 16px;
                background: #f3f8f7;
            }
            input { flex: 1; min-width: 0; padding: 0; border: 0; background: none; font: 13px "Open Sans", sans-serif; }
            input::placeholder { color: #5f6464; }
            .run::after {
                content: "";
                position: absolute;
                left: 9px;
                bottom: -8px;
                width: 6px;
                height: 3px;
                border-radius: 2px;
                background: #7c8484;
            }
            .mail { position: absolute; right: -6px; top: -6px; }
            .on { padding: 8px 6px; margin: 0 -6px; border-radius: 4px; background: #f0f5f5; box-shadow: 3px 0 0 #e4eeee; }
            .on::after { left: 10px; bottom: 0; width: 16px; background: #1d7f92; }
            .m365 b {
                position: absolute;
                right: 0;
                bottom: 0;
                background: #000;
                color: #fff;
                font: 700 7px/8px Roboto, sans-serif;
            }
            .tray { display: flex; align-items: center; justify-content: flex-end; gap: 8px; padding-right: 18px; }
            time { margin-left: 7px; line-height: 16px; text-align: right; font-size: 12px; }
            .up { margin-right: 10px; }
            .cloud { margin: 0 7px 0 8px; }
        </style>
        <div class="mid">
            <button aria-label="Start"><ui-icon name="windows" size="24"></ui-icon></button>
            <label><ui-icon name="search" size="16" weight="3"></ui-icon><input type="text" placeholder="Search" aria-label="Search Windows"></label>
            <button aria-label="Task view"><ui-icon name="taskview" size="24"></ui-icon></button>
            <button class="run" aria-label="File Explorer"><ui-icon name="explorer" size="24"></ui-icon></button>
            <button class="run" aria-label="Outlook"><ui-icon name="outlook" size="24"></ui-icon><ui-icon class="mail" name="mail" size="16"></ui-icon></button>
            <button class="run on" aria-label="Chrome"><ui-icon name="chrome" size="24"></ui-icon></button>
            <button class="m365"><ui-icon name="copilot" size="24"></ui-icon><b>M365</b></button>
            <button aria-label="Store"><ui-icon name="store" size="24"></ui-icon></button>
        </div>
        <div class="tray">
            <button class="up" aria-label="Hidden icons"><ui-icon name="chevup" size="12"></ui-icon></button>
            <ui-icon name="dropbox" size="16"></ui-icon>
            <ui-icon class="cloud" name="cloud" size="17"></ui-icon>
            <ui-icon name="network" size="17" weight="1.500"></ui-icon>
            <ui-icon name="volume" size="15" weight="1.500"></ui-icon>
            <ui-icon name="battery" size="20" weight="1.500"></ui-icon>
            <time>7:23 PM<br>4/28/2026</time>
        </div>
        `;
    }
}
customElements.define('task-bar', TaskBar);
</script>
</body>
</html>
